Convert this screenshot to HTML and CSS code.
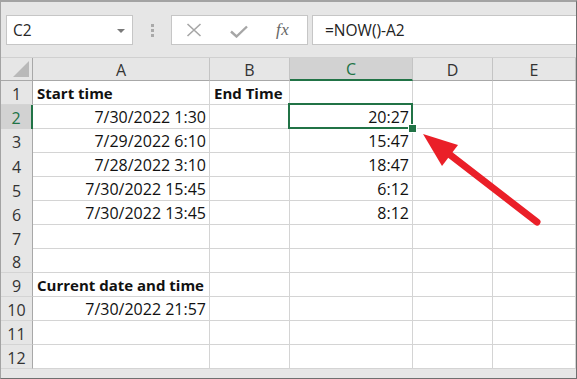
FILE: index.html
```html
<!DOCTYPE html>
<html>
<head>
<meta charset="utf-8">
<link rel="stylesheet" href="styles.css">
</head>
<body>
<div class="frame">
  <div class="toolbar">
    <div class="namebox">
      <span class="name">C2</span>
      <span class="dd"></span>
    </div>
    <div class="grip"><i></i><i></i><i></i></div>
    <div class="btns">
      <svg class="ico-x" width="16" height="14" viewBox="0 0 16 14"><path d="M1.5 1 L14.5 13 M14.5 1 L1.5 13" stroke="#a6a6a6" stroke-width="1.6" fill="none"/></svg>
      <svg class="ico-check" width="18" height="13" viewBox="0 0 18 13"><path d="M1 6.5 L6.5 11.5 L17 1.5" stroke="#a6a6a6" stroke-width="2.4" fill="none"/></svg>
      <span class="fx">fx</span>
    </div>
    <div class="formula">=NOW()-A2</div>
  </div>
  <div class="sheet">
    <div class="hd corner"><svg width="17" height="17" viewBox="0 0 17 17"><polygon points="0,16 16,16 16,0" fill="#b9b9b9"/></svg></div>
    <div class="hd col">A</div>
    <div class="hd col">B</div>
    <div class="hd col sel">C</div>
    <div class="hd col">D</div>
    <div class="hd col">E</div>

    <div class="hd row r24">1</div><div class="c b">Start time</div><div class="c b">End Time</div><div class="c"></div><div class="c"></div><div class="c"></div>
    <div class="hd row rsel r25">2</div><div class="c n">7/30/2022 1:30</div><div class="c"></div><div class="c n active">20:27</div><div class="c"></div><div class="c"></div>
    <div class="hd row r25">3</div><div class="c n">7/29/2022 6:10</div><div class="c"></div><div class="c n">15:47</div><div class="c"></div><div class="c"></div>
    <div class="hd row r26">4</div><div class="c n">7/28/2022 3:10</div><div class="c"></div><div class="c n">18:47</div><div class="c"></div><div class="c"></div>
    <div class="hd row r26">5</div><div class="c n">7/30/2022 15:45</div><div class="c"></div><div class="c n">6:12</div><div class="c"></div><div class="c"></div>
    <div class="hd row r26">6</div><div class="c n">7/30/2022 13:45</div><div class="c"></div><div class="c n">8:12</div><div class="c"></div><div class="c"></div>
    <div class="hd row r26">7</div><div class="c"></div><div class="c"></div><div class="c"></div><div class="c"></div><div class="c"></div>
    <div class="hd row r24">8</div><div class="c"></div><div class="c"></div><div class="c"></div><div class="c"></div><div class="c"></div>
    <div class="hd row r24">9</div><div class="c b">Current date and time</div><div class="c"></div><div class="c"></div><div class="c"></div><div class="c"></div>
    <div class="hd row r24">10</div><div class="c n">7/30/2022 21:57</div><div class="c"></div><div class="c"></div><div class="c"></div><div class="c"></div>
    <div class="hd row r24">11</div><div class="c"></div><div class="c"></div><div class="c"></div><div class="c"></div><div class="c"></div>
    <div class="hd row r24">12</div><div class="c"></div><div class="c"></div><div class="c"></div><div class="c"></div><div class="c"></div>
  </div>
  <svg class="arrow" width="577" height="379" viewBox="0 0 577 379">
    <line x1="449" y1="154" x2="537" y2="222" stroke="#ea1f28" stroke-width="7" stroke-linecap="round"/>
    <polygon points="423,134 458,145 442,166" fill="#ea1f28"/>
  </svg>
</div>
</body>
</html>
```

FILE: styles.css
```css
* { box-sizing: border-box; }
html, body { margin: 0; padding: 0; background: #ffffff; }
.frame {
  position: relative;
  width: 577px;
  height: 379px;
  overflow: hidden;
  background: #e6e6e6;
  border-top: 2px solid #a3a3a3;
  border-left: 1px solid #a3a3a3;
  border-right: 1px solid #6f6f6f;
  border-bottom: 1px solid #6f6f6f;
  font-family: "Open Sans", "Noto Sans", sans-serif;
}
.toolbar {
  height: 55px;
  display: flex;
  align-items: flex-start;
  padding-top: 13px;
  padding-left: 5px;
}
.namebox {
  width: 127px;
  height: 30px;
  background: #fff;
  border: 1px solid #c6c6c6;
  display: flex;
  align-items: center;
  justify-content: space-between;
  padding: 0 7px 0 6px;
}
.name { font-size: 15.5px; color: #262626; }
.dd {
  width: 0; height: 0;
  border-left: 4px solid transparent;
  border-right: 4px solid transparent;
  border-top: 4px solid #7a7a7a;
  margin-top: 1px;
}
.grip {
  width: 38px;
  height: 30px;
  display: flex;
  flex-direction: column;
  align-items: center;
  justify-content: center;
  gap: 2px;
}
.grip i { display: block; width: 3px; height: 3px; background: #a9a9a9; }
.btns {
  width: 137px;
  height: 30px;
  background: #fff;
  border: 1px solid #c6c6c6;
  display: flex;
  align-items: center;
  padding-left: 14px;
}
.ico-x { margin-right: 28px; }
.ico-check { margin-right: 28px; margin-top: 2px; }
.fx {
  font-family: "Liberation Serif", "DejaVu Serif", serif;
  font-style: italic;
  font-size: 17px;
  color: #666;
  letter-spacing: 0.5px;
}
.formula {
  margin-left: 4px;
  flex: 1;
  height: 30px;
  background: #fff;
  border: 1px solid #c6c6c6;
  border-right: none;
  display: flex;
  align-items: center;
  padding-left: 12px;
  font-size: 15.5px;
  color: #222;
}
.sheet {
  display: grid;
  grid-template-columns: 32px 177px 80px 123px 80px 83px;
  grid-template-rows: 23px;
  grid-auto-rows: 24px;
  background: #fff;
  border-top: 1px solid #d0d0d0;
}
.hd {
  background: #e6e6e6;
  color: #333;
  font-size: 16px;
  display: flex;
  align-items: center;
  justify-content: center;
  border-right: 1px solid #c4c4c4;
  border-bottom: 1px solid #c4c4c4;
}
.corner { justify-content: flex-end; align-items: flex-end; padding: 0 2px 2px 0; border-right: 1px solid #a8a8a8; border-bottom: 1px solid #a8a8a8; }
.col { border-bottom: 1px solid #a8a8a8; padding-top: 1px; }
.col.sel { background: #d2d2d2; color: #217346; border-bottom: 2px solid #217346; }
.row { border-right: 1px solid #a8a8a8; border-bottom: 1px solid #d4d4d4; padding-top: 2px; }
.row.rsel { background: #d2d2d2; color: #217346; border-right: 2px solid #217346; }
.r24 { height: 24px; }
.r25 { height: 25px; }
.r26 { height: 26px; }
.c {
  border-right: 1px solid #d4d4d4;
  border-bottom: 1px solid #d4d4d4;
  font-size: 16px;
  color: #111;
  display: flex;
  align-items: flex-end;
  padding: 0 3px 0 4px;
  white-space: nowrap;
}
.b { font-weight: 700; font-size: 15px; padding-bottom: 1px; }
.n { justify-content: flex-end; }
.active { position: relative; }
.active::before {
  content: "";
  position: absolute;
  left: -2px; top: -2px; right: -1px; bottom: -1px;
  border: 2px solid #217346;
}
.active::after {
  content: "";
  position: absolute;
  right: -5px; bottom: -5px;
  width: 7px; height: 7px;
  background: #217346;
  border: 1px solid #fff;
}
.arrow { position: absolute; left: -1px; top: -2px; pointer-events: none; }
```
